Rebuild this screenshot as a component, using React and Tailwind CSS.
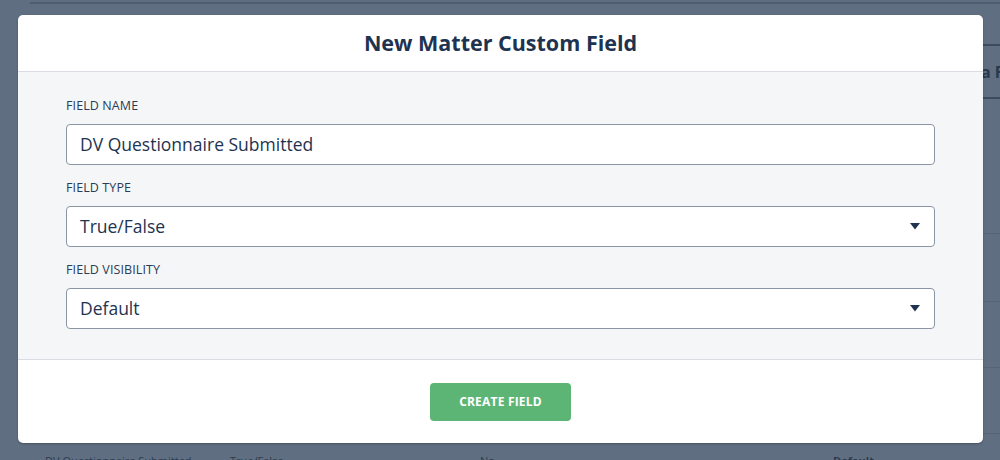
import React from "react";

function Caret() {
  return (
    <svg width="10" height="7" viewBox="0 0 10 7" className="shrink-0">
      <path d="M0 0 H10 L5 6.5 Z" fill="#1e3350" />
    </svg>
  );
}

function Field({ label, children, className = "" }) {
  return (
    <div className={className}>
      <div className="text-[12.5px] leading-[18px] tracking-[0.1px] text-[#2b3c55] mb-[9px]">{label}</div>
      {children}
    </div>
  );
}

function Select({ value }) {
  return (
    <div className="flex h-[41px] items-center justify-between rounded-[4px] border border-[#8a95a6] bg-white pl-[13px] pr-[14px]">
      <span className="text-[17.5px] text-[#1e3350]">{value}</span>
      <Caret />
    </div>
  );
}

export default function App() {
  return (
    <div className="relative h-[460px] w-[1000px] overflow-hidden bg-[#5f6e80] font-['Open_Sans',sans-serif]">
      {/* background page (dimmed) */}
      <div className="ml-[30px] h-[4px] border-b-2 border-[#4f5d70]" />
      <div className="mt-[40px] ml-auto flex h-[55px] w-[17px] items-center overflow-hidden border-y-2 border-[#3d4b5e]">
        <span className="-ml-[2px] whitespace-nowrap text-[16px] font-bold text-[#2a384b]">a F</span>
      </div>
      <div className="ml-auto w-[17px]">
        <div className="mt-[134px] h-[68px] border-t border-[#56647a]" />
        <div className="h-[66px] border-t border-[#56647a]" />
        <div className="h-[66px] border-t border-[#56647a]" />
        <div className="border-t border-[#56647a]" />
      </div>
      <div className="absolute left-[45px] top-[453px] flex whitespace-nowrap text-[11px] text-[#2d3b4f]">
        <span className="w-[185px]">DV Questionnaire Submitted</span>
        <span className="w-[250px]">True/False</span>
        <span className="w-[353px]">No</span>
        <span className="font-bold">Default</span>
      </div>

      {/* modal */}
      <div className="absolute left-[18px] top-[15px] w-[965px] overflow-hidden rounded-[5px] bg-white shadow-[0_1px_2px_rgba(0,0,0,0.25)]">
        <div className="flex h-[57px] items-center justify-center border-b border-[#d9dde3]">
          <h1 className="text-[21.5px] font-bold text-[#1e3350]">New Matter Custom Field</h1>
        </div>
        <div className="bg-[#f5f6f8] px-[48px] pt-[25px] pb-[30px] border-b border-[#d9dde3]">
          <Field label="FIELD NAME">
            <div className="flex h-[41px] items-center rounded-[4px] border border-[#8a95a6] bg-white px-[13px]">
              <span className="text-[17.5px] text-[#1e3350]">DV Questionnaire Submitted</span>
            </div>
          </Field>
          <Field label="FIELD TYPE" className="mt-[14px]">
            <Select value="True/False" />
          </Field>
          <Field label="FIELD VISIBILITY" className="mt-[14px]">
            <Select value="Default" />
          </Field>
        </div>
        <div className="flex h-[83px] items-center justify-center">
          <button className="h-[38px] w-[141px] rounded-[4px] bg-[#5cb574] text-[12px] font-bold tracking-[0.2px] text-white">
            CREATE FIELD
          </button>
        </div>
      </div>
    </div>
  );
}
